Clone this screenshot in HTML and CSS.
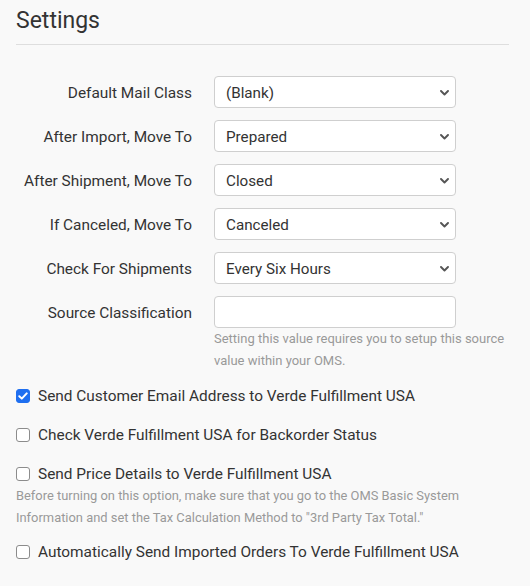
FILE: index.html
```html
<!DOCTYPE html>
<html>
<head>
<meta charset="utf-8">
<link rel="stylesheet" href="styles.css">
</head>
<body>
<div class="page">
  <h2 class="title">Settings</h2>
  <hr class="rule">
  <div class="form">
    <div class="row">
      <label class="lbl">Default Mail Class</label>
      <div class="field">
        <div class="select-wrap">
          <select class="sel"><option>(Blank)</option></select>
          <svg class="chev" width="9" height="6" viewBox="0 0 9 6"><path d="M1 1 L4.5 4.5 L8 1" fill="none" stroke="#555" stroke-width="1.9" stroke-linecap="round" stroke-linejoin="round"/></svg>
        </div>
      </div>
    </div>
    <div class="row">
      <label class="lbl">After Import, Move To</label>
      <div class="field">
        <div class="select-wrap">
          <select class="sel"><option>Prepared</option></select>
          <svg class="chev" width="9" height="6" viewBox="0 0 9 6"><path d="M1 1 L4.5 4.5 L8 1" fill="none" stroke="#555" stroke-width="1.9" stroke-linecap="round" stroke-linejoin="round"/></svg>
        </div>
      </div>
    </div>
    <div class="row">
      <label class="lbl">After Shipment, Move To</label>
      <div class="field">
        <div class="select-wrap">
          <select class="sel"><option>Closed</option></select>
          <svg class="chev" width="9" height="6" viewBox="0 0 9 6"><path d="M1 1 L4.5 4.5 L8 1" fill="none" stroke="#555" stroke-width="1.9" stroke-linecap="round" stroke-linejoin="round"/></svg>
        </div>
      </div>
    </div>
    <div class="row">
      <label class="lbl">If Canceled, Move To</label>
      <div class="field">
        <div class="select-wrap">
          <select class="sel"><option>Canceled</option></select>
          <svg class="chev" width="9" height="6" viewBox="0 0 9 6"><path d="M1 1 L4.5 4.5 L8 1" fill="none" stroke="#555" stroke-width="1.9" stroke-linecap="round" stroke-linejoin="round"/></svg>
        </div>
      </div>
    </div>
    <div class="row">
      <label class="lbl">Check For Shipments</label>
      <div class="field">
        <div class="select-wrap">
          <select class="sel"><option>Every Six Hours</option></select>
          <svg class="chev" width="9" height="6" viewBox="0 0 9 6"><path d="M1 1 L4.5 4.5 L8 1" fill="none" stroke="#555" stroke-width="1.9" stroke-linecap="round" stroke-linejoin="round"/></svg>
        </div>
      </div>
    </div>
    <div class="row">
      <label class="lbl">Source Classification</label>
      <div class="field">
        <input class="txt" type="text">
        <p class="help">Setting this value requires you to setup this source value within your OMS.</p>
      </div>
    </div>
  </div>
  <div class="checks">
    <div class="check-item">
      <label class="check"><span class="box checked"><svg width="10" height="8" viewBox="0 0 10 8"><path d="M1.3 4.2 L3.8 6.6 L8.7 1.4" fill="none" stroke="#fff" stroke-width="2" stroke-linecap="round" stroke-linejoin="round"/></svg></span>Send Customer Email Address to Verde Fulfillment USA</label>
    </div>
    <div class="check-item">
      <label class="check"><span class="box"></span>Check Verde Fulfillment USA for Backorder Status</label>
    </div>
    <div class="check-item">
      <label class="check"><span class="box"></span>Send Price Details to Verde Fulfillment USA</label>
      <p class="help help-wide">Before turning on this option, make sure that you go to the OMS Basic System Information and set the Tax Calculation Method to "3rd Party Tax Total."</p>
    </div>
    <div class="check-item">
      <label class="check"><span class="box"></span>Automatically Send Imported Orders To Verde Fulfillment USA</label>
    </div>
  </div>
</div>
</body>
</html>
```

FILE: styles.css
```css
html, body {
  margin: 0;
  padding: 0;
  background: #f9f9f9;
}
body {
  font-family: Roboto, "Liberation Sans", Arial, sans-serif;
  color: #333;
}
.page {
  padding: 7px 21px 0 16px;
}
.title {
  margin: 0;
  font-size: 23px;
  line-height: 27px;
  font-weight: 400;
  color: #333;
}
.rule {
  margin: 10px 0 0 0;
  border: 0;
  border-top: 1px solid #dedede;
  height: 0;
}
.form {
  margin-top: 31px;
  display: flex;
  flex-direction: column;
  gap: 12px;
}
.row {
  display: grid;
  grid-template-columns: 176px 1fr;
  column-gap: 22px;
  align-items: start;
}
.lbl {
  font-size: 15.4px;
  line-height: 30px;
  padding-top: 2px;
  text-align: right;
  color: #333;
  white-space: nowrap;
}
.field {
  min-width: 0;
}
.select-wrap {
  position: relative;
  width: 242px;
}
.sel {
  -webkit-appearance: none;
  appearance: none;
  width: 242px;
  height: 32px;
  box-sizing: border-box;
  border: 1px solid #cfcfcf;
  border-radius: 4px;
  background: #fff;
  padding: 1px 28px 0 11px;
  font-family: Roboto, "Liberation Sans", Arial, sans-serif;
  font-size: 15.2px;
  color: #333;
  display: block;
  margin: 0;
}
.chev {
  position: absolute;
  right: 7px;
  top: 14px;
}
.txt {
  display: block;
  width: 242px;
  height: 32px;
  box-sizing: border-box;
  border: 1px solid #cfcfcf;
  border-radius: 4px;
  background: #fff;
  margin: 0;
  padding: 0 11px;
  font-family: Roboto, "Liberation Sans", Arial, sans-serif;
  font-size: 15px;
}
.help {
  margin: 0;
  font-size: 13px;
  line-height: 22px;
  color: #999;
}
.checks {
  margin-top: 12px;
  display: flex;
  flex-direction: column;
  gap: 15px;
}
.check {
  display: flex;
  align-items: center;
  gap: 8px;
  font-size: 15.4px;
  line-height: 24px;
  color: #333;
  white-space: nowrap;
}
.box {
  flex: none;
  width: 14px;
  height: 14px;
  box-sizing: border-box;
  border: 1px solid #8c8c8c;
  border-radius: 3px;
  background: #fff;
  display: flex;
  align-items: center;
  justify-content: center;
}
.box.checked {
  background: #1f6ff0;
  border-color: #1f6ff0;
}
.help-wide {
  margin-top: -1px;
  margin-bottom: -4px;
  font-size: 12.9px;
}
```
